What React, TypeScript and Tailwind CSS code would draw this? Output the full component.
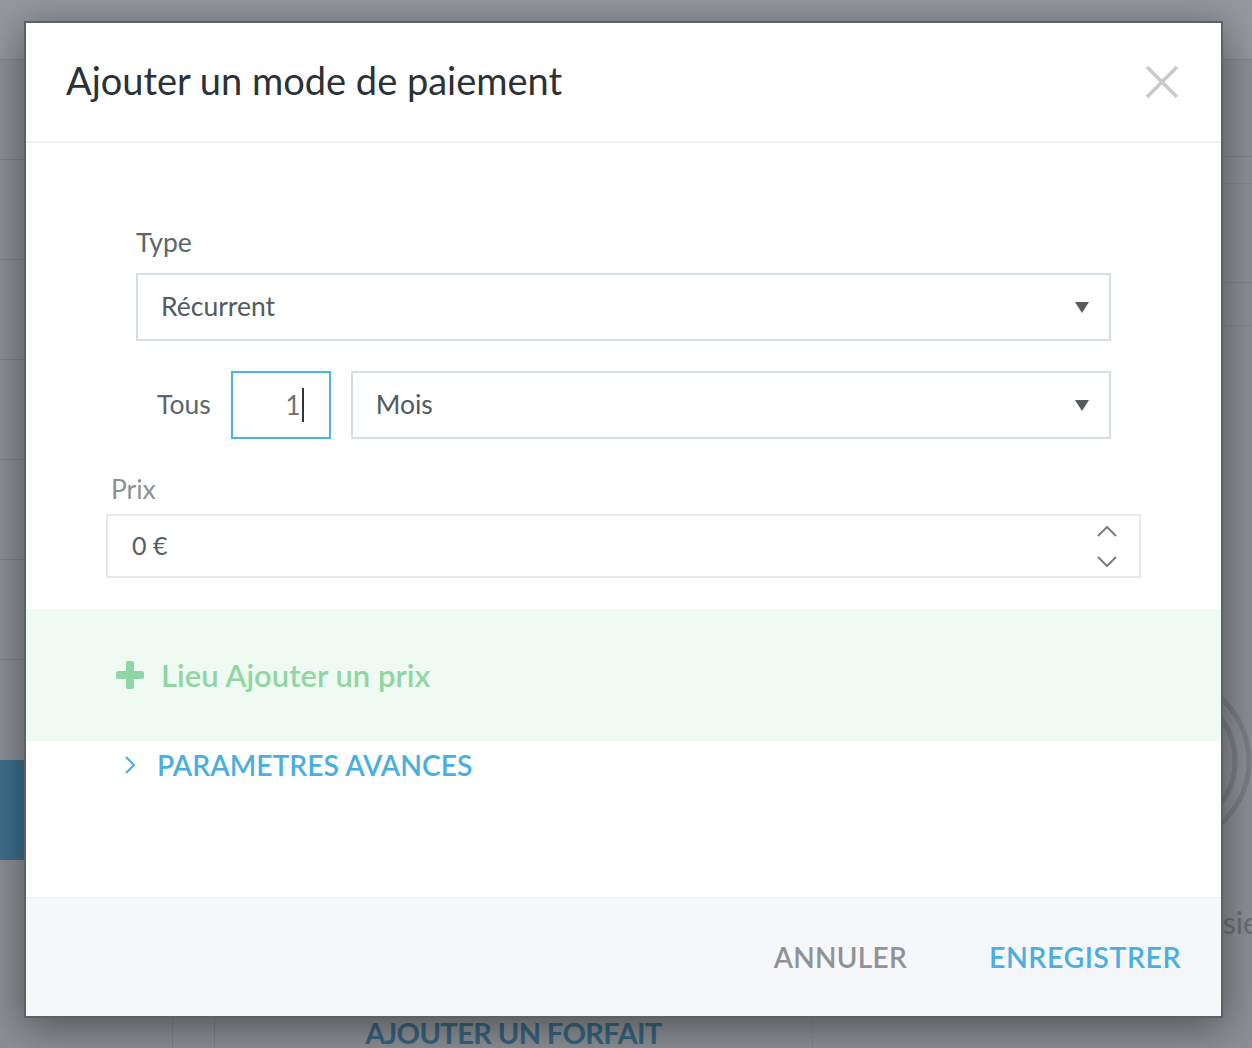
import type { ReactNode } from "react";

const font = "font-['Lato','Noto_Sans',sans-serif]";

function Caret() {
	return (
		<svg width="14" height="11" viewBox="0 0 14 11" className="shrink-0">
			<polygon points="0,0 14,0 7,11" fill="#555a5e" />
		</svg>
	);
}

function SelectBox({ value, className = "" }: { value: string; className?: string }) {
	return (
		<div
			className={`flex h-[68px] items-center justify-between border-2 border-[#d3dfe1] bg-white pl-[23px] pr-[20px] text-[26.5px] text-[#4f5a61] ${className}`}
		>
			<span>{value}</span>
			<Caret />
		</div>
	);
}

function Field({ label, children }: { label: string; children: ReactNode }) {
	return (
		<div>
			<div className="h-[30px] pl-[5px] text-[26.4px] leading-[30px] text-[#8c9196]">
				{label}
			</div>
			<div className="mt-[10px]">{children}</div>
		</div>
	);
}

function Backdrop() {
	return (
		<div className="flex h-full flex-col">
			<div className="h-[60px] shrink-0 border-b border-[#84878c] bg-[#95989d]" />
			<div className="flex flex-1">
				<aside className="flex w-[173px] flex-col border-r border-[#7f8287]">
					<div className="h-[100px] border-b border-[#7f8287]" />
					<div className="h-[100px] border-b border-[#7f8287]" />
					<div className="h-[100px] border-b border-[#7f8287]" />
					<div className="h-[100px] border-b border-[#7f8287]" />
					<div className="h-[100px] border-b border-[#7f8287]" />
					<div className="h-[100px] border-b border-[#7f8287]" />
					<div className="h-[100px]" />
					<div className="h-[100px] bg-[#3e6f8d]" />
				</aside>
				<div className="w-[42px] border-r border-[#7f8287]" />
				<main className="flex flex-1 flex-col justify-end">
					<div className="translate-y-[3px] text-center text-[29px] font-bold leading-[36px] tracking-[-0.6px] text-[#36637f]">
						AJOUTER UN FORFAIT
					</div>
				</main>
				<div className="w-[43px] border-l border-dashed border-[#7f8287]" />
				<div className="flex w-[397px] flex-col">
					<div className="h-[97px] border-b border-[#7f8287]" />
					<div className="h-[27px] border-b border-[#84878c]" />
					<div className="h-[99px] border-b border-[#7f8287]" />
					<div className="h-[43px] border-b border-dashed border-[#7f8287]" />
					<div className="pl-[220px] pt-[345px]">
						<svg width="180" height="180" viewBox="0 0 180 180">
							<circle cx="90" cy="90" r="84" fill="none" stroke="#7b7e83" strokeWidth="5" />
							<circle cx="90" cy="90" r="70" fill="none" stroke="#7b7e83" strokeWidth="5" />
						</svg>
					</div>
					<div className="mt-[53px] pl-[326px] text-[30px] leading-[36px] text-[#6a6e73]">
						Plusieurs
					</div>
				</div>
			</div>
		</div>
	);
}

export default function App() {
	return (
		<div className={`relative h-[1048px] w-[1252px] overflow-hidden bg-[#8c8f94] ${font}`}>
			<Backdrop />

			<div className="absolute left-[24px] top-[21px] flex h-[997px] w-[1199px] flex-col border-2 border-[#5d6065] bg-white shadow-[0_8px_40px_rgba(0,0,0,0.45)]">
				<header className="flex h-[120px] shrink-0 items-center justify-between border-b-2 border-[#f0f1f3] pl-[40px] pr-[42px]">
					<h1 className="-translate-y-[2px] text-[38px] leading-none text-[#2b3237]">
						Ajouter un mode de paiement
					</h1>
					<button type="button" aria-label="Fermer">
						<svg width="34" height="34" viewBox="0 0 34 34">
							<path d="M2 2 L32 32 M32 2 L2 32" stroke="#c9c9c9" strokeWidth="3.5" />
						</svg>
					</button>
				</header>

				<section className="flex-1 pt-[84px]">
					<div className="px-[110px]">
						<div className="h-[30px] text-[26.5px] leading-[30px] text-[#5b666e]">Type</div>
						<SelectBox value="Récurrent" className="mt-[16px]" />

						<div className="mt-[30px] flex items-center gap-[20px] pl-[21px]">
							<span className="text-[26.5px] text-[#5b666e]">Tous</span>
							<div className="flex h-[68px] w-[100px] items-center justify-end border-2 border-[#4db3e2] pr-[25px] text-[26px] text-[#6b6f72]">
								<span>1</span>
								<span className="ml-[1px] h-[34px] w-[2px] bg-[#333]" />
							</div>
							<SelectBox value="Mois" className="flex-1" />
						</div>
					</div>

					<div className="mt-[35px] px-[80px]">
						<Field label="Prix">
							<div className="flex h-[64px] items-center justify-between border-2 border-[#e7e8e9] pl-[24px] pr-[22px] text-[25px] text-[#555e65]">
								<span>0 €</span>
								<div className="flex flex-col gap-[19px]">
									<svg width="20" height="12" viewBox="0 0 20 12">
										<path d="M1 11 L10 2 L19 11" fill="none" stroke="#7a7d80" strokeWidth="2" />
									</svg>
									<svg width="20" height="12" viewBox="0 0 20 12">
										<path d="M1 1 L10 10 L19 1" fill="none" stroke="#7a7d80" strokeWidth="2" />
									</svg>
								</div>
							</div>
						</Field>
					</div>

					<div className="mt-[31px] flex h-[132px] items-center gap-[17px] bg-[#effaf2] pl-[90px]">
						<svg width="28" height="28" viewBox="0 0 28 28">
							<rect x="10" y="0" width="8" height="28" rx="2" fill="#8fd6a4" />
							<rect x="0" y="10" width="28" height="8" rx="2" fill="#8fd6a4" />
						</svg>
						<span className="text-[31px] font-semibold text-[#8fd6a4]">Lieu Ajouter un prix</span>
					</div>

					<div className="flex h-[48px] items-center gap-[22px] pl-[99px]">
						<svg width="10" height="18" viewBox="0 0 10 18">
							<path d="M1 1 L9 9 L1 17" fill="none" stroke="#4aafe0" strokeWidth="2.2" />
						</svg>
						<span className="text-[28.3px] font-semibold text-[#4aafe0]">PARAMETRES AVANCES</span>
					</div>
				</section>

				<footer className="flex h-[119px] shrink-0 items-center justify-end gap-[82px] border-t border-[#eef0f2] bg-[#f6f7f9] pr-[40px]">
					<button type="button" className="text-[28px] font-semibold tracking-[0.3px] text-[#8f9297]">
						ANNULER
					</button>
					<button type="button" className="text-[28.5px] font-semibold tracking-[0.5px] text-[#4aaee0]">
						ENREGISTRER
					</button>
				</footer>
			</div>
		</div>
	);
}
